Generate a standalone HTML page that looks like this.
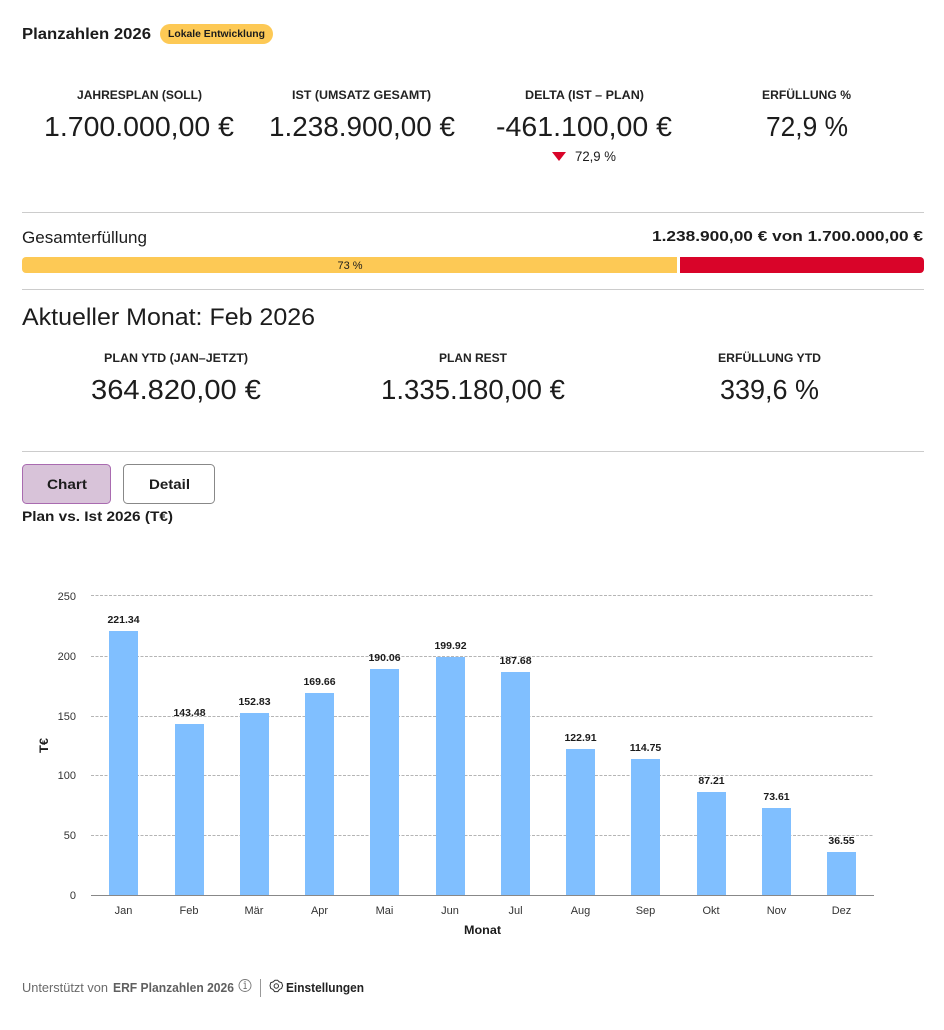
<!DOCTYPE html>
<html lang="de"><head><meta charset="utf-8"><title>Planzahlen 2026</title>
<style>
html,body{margin:0;padding:0;background:#fff;width:944px;height:1030px;overflow:hidden}
svg{display:block}
text{font-family:"Liberation Sans",sans-serif;fill:#1c1c1c}
.b{font-weight:700}
.l{font-size:12px;font-weight:700;fill:#222}
.v{font-size:28px;fill:#1c1c1c}
.t{font-size:11px;fill:#333}
.d{font-size:10.5px;font-weight:700;fill:#1c1c1c}
</style></head><body>
<svg width="944" height="1030" viewBox="0 0 944 1030" xmlns="http://www.w3.org/2000/svg">
<rect width="944" height="1030" fill="#fff"/>
<text x="22" y="39" class="b" font-size="16" textLength="129" lengthAdjust="spacingAndGlyphs">Planzahlen 2026</text>
<rect x="160" y="24" width="113" height="20" rx="10" fill="#fdc955"/>
<text x="168" y="37" class="b" font-size="10.5" textLength="97" lengthAdjust="spacingAndGlyphs">Lokale Entwicklung</text>

<text x="77" y="99" class="l" textLength="125" lengthAdjust="spacingAndGlyphs">JAHRESPLAN (SOLL)</text>
<text x="292" y="99" class="l" textLength="139" lengthAdjust="spacingAndGlyphs">IST (UMSATZ GESAMT)</text>
<text x="525" y="99" class="l" textLength="119" lengthAdjust="spacingAndGlyphs">DELTA (IST – PLAN)</text>
<text x="762" y="99" class="l" textLength="89" lengthAdjust="spacingAndGlyphs">ERFÜLLUNG %</text>
<text x="44" y="136" class="v" textLength="190" lengthAdjust="spacingAndGlyphs">1.700.000,00 €</text>
<text x="269" y="136" class="v" textLength="186" lengthAdjust="spacingAndGlyphs">1.238.900,00 €</text>
<text x="496" y="136" class="v" textLength="176" lengthAdjust="spacingAndGlyphs">-461.100,00 €</text>
<text x="766" y="136" class="v" textLength="82" lengthAdjust="spacingAndGlyphs">72,9 %</text>
<path d="M552 152H566L559 161Z" fill="#d90429"/>
<text x="575" y="161" font-size="14" textLength="41" lengthAdjust="spacingAndGlyphs">72,9 %</text>

<rect x="22" y="212" width="902" height="1" fill="#ccc"/>
<text x="22" y="243" font-size="16.5" textLength="125" lengthAdjust="spacingAndGlyphs">Gesamterfüllung</text>
<text x="652" y="241" class="b" font-size="15" textLength="271" lengthAdjust="spacingAndGlyphs">1.238.900,00 € von 1.700.000,00 €</text>
<path d="M26 257H677V273H26A4 4 0 0 1 22 269V261A4 4 0 0 1 26 257Z" fill="#fdc955"/>
<path d="M680 257H920A4 4 0 0 1 924 261V269A4 4 0 0 1 920 273H680Z" fill="#d90429"/>
<text x="350" y="269" font-size="11" text-anchor="middle">73 %</text>
<rect x="22" y="289" width="902" height="1" fill="#ccc"/>

<text x="22" y="325" font-size="24" textLength="293" lengthAdjust="spacingAndGlyphs">Aktueller Monat: Feb 2026</text>
<text x="104" y="362" class="l" textLength="144" lengthAdjust="spacingAndGlyphs">PLAN YTD (JAN–JETZT)</text>
<text x="439" y="362" class="l" textLength="68" lengthAdjust="spacingAndGlyphs">PLAN REST</text>
<text x="718" y="362" class="l" textLength="103" lengthAdjust="spacingAndGlyphs">ERFÜLLUNG YTD</text>
<text x="91" y="399" class="v" textLength="170" lengthAdjust="spacingAndGlyphs">364.820,00 €</text>
<text x="381" y="399" class="v" textLength="184" lengthAdjust="spacingAndGlyphs">1.335.180,00 €</text>
<text x="720" y="399" class="v" textLength="99" lengthAdjust="spacingAndGlyphs">339,6 %</text>
<rect x="22" y="451" width="902" height="1" fill="#ccc"/>

<rect x="22.5" y="464.5" width="88" height="39" rx="4" fill="#d8c3d9" stroke="#a96bb0"/>
<text x="47" y="489" class="b" font-size="14" textLength="40" lengthAdjust="spacingAndGlyphs">Chart</text>
<rect x="123.5" y="464.5" width="91" height="39" rx="4" fill="#fff" stroke="#888"/>
<text x="149" y="489" class="b" font-size="14" textLength="41" lengthAdjust="spacingAndGlyphs">Detail</text>
<text x="22" y="521" class="b" font-size="14" textLength="151" lengthAdjust="spacingAndGlyphs">Plan vs. Ist 2026 (T€)</text>

<g stroke="#b5b5b5" stroke-width="1" stroke-dasharray="3 1.5">
<path d="M91 595.5H874M91 656.5H874M91 716.5H874M91 775.5H874M91 835.5H874"/>
</g>
<g text-anchor="end" class="t">
<text class="t" x="76" y="600">250</text>
<text class="t" x="76" y="660">200</text>
<text class="t" x="76" y="720">150</text>
<text class="t" x="76" y="779">100</text>
<text class="t" x="76" y="839">50</text>
<text class="t" x="76" y="899">0</text>
</g>
<g fill="#80bfff">
<rect x="109" y="631" width="29" height="264"/>
<rect x="175" y="724" width="29" height="171"/>
<rect x="240" y="713" width="29" height="182"/>
<rect x="305" y="693" width="29" height="202"/>
<rect x="370" y="669" width="29" height="226"/>
<rect x="436" y="657" width="29" height="238"/>
<rect x="501" y="672" width="29" height="223"/>
<rect x="566" y="749" width="29" height="146"/>
<rect x="631" y="759" width="29" height="136"/>
<rect x="697" y="792" width="29" height="103"/>
<rect x="762" y="808" width="29" height="87"/>
<rect x="827" y="852" width="29" height="43"/>
</g>
<rect x="91" y="895" width="783" height="1" fill="#888"/>
<g text-anchor="middle">
<text class="d" x="123.5" y="623">221.34</text>
<text class="d" x="189.5" y="716">143.48</text>
<text class="d" x="254.5" y="705">152.83</text>
<text class="d" x="319.5" y="685">169.66</text>
<text class="d" x="384.5" y="661">190.06</text>
<text class="d" x="450.5" y="649">199.92</text>
<text class="d" x="515.5" y="664">187.68</text>
<text class="d" x="580.5" y="741">122.91</text>
<text class="d" x="645.5" y="751">114.75</text>
<text class="d" x="711.5" y="784">87.21</text>
<text class="d" x="776.5" y="800">73.61</text>
<text class="d" x="841.5" y="844">36.55</text>
<text class="t" x="123.5" y="914">Jan</text>
<text class="t" x="189" y="914">Feb</text>
<text class="t" x="254" y="914">Mär</text>
<text class="t" x="319.5" y="914">Apr</text>
<text class="t" x="384.5" y="914">Mai</text>
<text class="t" x="450" y="914">Jun</text>
<text class="t" x="515.5" y="914">Jul</text>
<text class="t" x="580.5" y="914">Aug</text>
<text class="t" x="645.5" y="914">Sep</text>
<text class="t" x="711" y="914">Okt</text>
<text class="t" x="776.5" y="914">Nov</text>
<text class="t" x="841.5" y="914">Dez</text>
</g>
<text x="464" y="934" class="b" font-size="12" textLength="37" lengthAdjust="spacingAndGlyphs">Monat</text>
<text transform="translate(48 753) rotate(-90)" class="b" font-size="12" textLength="15" lengthAdjust="spacingAndGlyphs">T€</text>

<text x="22" y="992" font-size="12.5" style="fill:#6a6a6a" textLength="86" lengthAdjust="spacingAndGlyphs">Unterstützt von</text>
<text x="113" y="992" class="b" font-size="12.5" style="fill:#5f5f5f" textLength="121" lengthAdjust="spacingAndGlyphs">ERF Planzahlen 2026</text>
<circle cx="245" cy="985.5" r="6" fill="none" stroke="#777" stroke-width=".9"/>
<path d="M243.6 983.2H245.2V988.4M243.5 988.5H246.8" fill="none" stroke="#777" stroke-width=".9"/>
<circle cx="245" cy="981.6" r=".6" fill="#777"/>
<rect x="260" y="979" width="1" height="18" fill="#999"/>
<path d="M275 980.2L277.6 980.2L279.2 981.9L281.6 982.6L282.6 985.6L281.6 988.4L279.4 989.4L277.8 991.6L274.6 991.6L273 989.4L270.8 988.4L270 985.6L270.8 982.6L273.2 981.9Z" fill="none" stroke="#333" stroke-width="1"/>
<circle cx="276.3" cy="986" r="2.2" fill="none" stroke="#333" stroke-width="1"/>
<text x="286" y="992" class="b" font-size="13" style="fill:#222" textLength="78" lengthAdjust="spacingAndGlyphs">Einstellungen</text>
</svg>
</body></html>
